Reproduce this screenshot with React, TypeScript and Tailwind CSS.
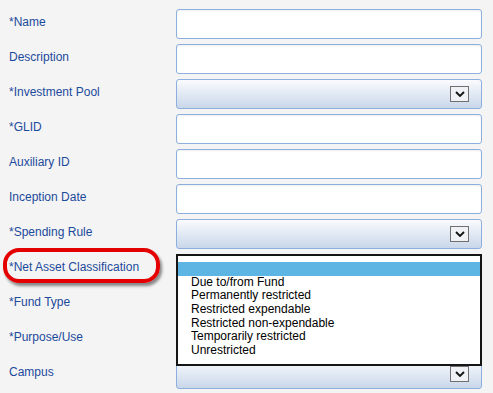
import React from "react";

type Field = {
  label: string;
  kind: "text" | "select";
};

const fields: Field[] = [
  { label: "*Name", kind: "text" },
  { label: "Description", kind: "text" },
  { label: "*Investment Pool", kind: "select" },
  { label: "*GLID", kind: "text" },
  { label: "Auxiliary ID", kind: "text" },
  { label: "Inception Date", kind: "text" },
  { label: "*Spending Rule", kind: "select" },
  { label: "*Net Asset Classification", kind: "select" },
  { label: "*Fund Type", kind: "select" },
  { label: "*Purpose/Use", kind: "select" },
  { label: "Campus", kind: "select" },
];

const options = [
  "Due to/from Fund",
  "Permanently restricted",
  "Restricted expendable",
  "Restricted non-expendable",
  "Temporarily restricted",
  "Unrestricted",
];

const TextBox = () => (
  <div className="h-[30px] flex-1 rounded-[3px] border border-[#8cafe0] bg-white shadow-[inset_0_1px_2px_rgba(0,0,0,0.07)]"></div>
);

const SelectBox = () => (
  <div className="h-[30px] flex-1 flex items-center justify-end pr-[12px] rounded-[3px] border border-[#8cafe0] bg-linear-to-b from-[#fafbfd] to-[#c9d7ea]">
    <div className="w-[19px] h-[16px] flex items-center justify-center border border-[#707070] bg-[#eff1f4]">
      <svg width="10" height="6" viewBox="0 0 10 6">
        <path d="M1 1 L5 5 L9 1" fill="none" stroke="#111" strokeWidth="1.8" />
      </svg>
    </div>
  </div>
);

const App = () => {
  return (
    <div className="w-[493px] h-[393px] overflow-hidden bg-[#f4f4f4] font-['Liberation_Sans',Arial,sans-serif]">
      <div className="relative flex flex-col gap-[5px] pt-[9px] pl-[9px] pr-[11px]">
        {fields.map((f) => (
          <div key={f.label} className="relative flex items-start">
            <div className="w-[167px] pt-[6px] text-[12px] leading-[14px] text-[#1c4a9c]">
              {f.label}
            </div>
            {f.kind === "text" ? <TextBox /> : <SelectBox />}

            {/* выделение красным */}
            {f.label === "*Net Asset Classification" && (
              <div className="absolute left-[-6px] top-[-6px] w-[157px] h-[35px] rounded-[16px] border-4 border-[#e40000] shadow-[2px_3px_3px_rgba(0,0,0,0.45)]"></div>
            )}

            {/* открытый список */}
            {f.label === "*Net Asset Classification" && (
              <div className="absolute left-[167px] top-0 w-[306px] h-[112px] border-2 border-[#151515] bg-white z-10">
                <div className="h-[6px]"></div>
                <div className="h-[13.5px] bg-[#5cb5e2]"></div>
                {options.map((o) => (
                  <div
                    key={o}
                    className="h-[13.7px] pl-[13px] text-[12px] leading-[13.7px] text-black"
                  >
                    {o}
                  </div>
                ))}
              </div>
            )}
          </div>
        ))}
      </div>
    </div>
  );
};

export default App;
